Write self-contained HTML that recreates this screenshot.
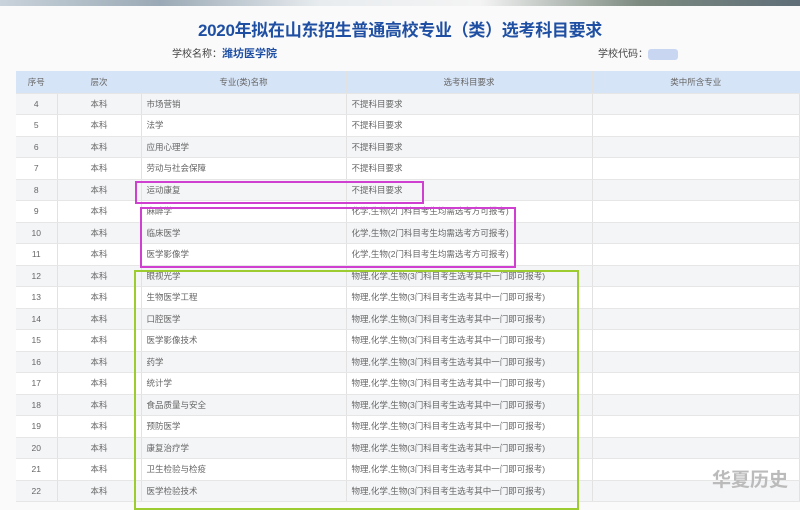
<!DOCTYPE html>
<html><head><meta charset="utf-8"><style>
body{margin:0;width:800px;height:496px;overflow:hidden;background:#fafafa;font-family:"Liberation Sans","Noto Sans CJK SC",sans-serif;position:relative}
.banner{position:absolute;left:0;top:0;width:800px;height:6px;background:linear-gradient(90deg,#c9d3db 0%,#9aa9b5 20%,#e8ecef 40%,#f4f4f4 60%,#7c8a80 80%,#5f6e78 100%)}
.title{position:absolute;top:16px;left:0;width:800px;text-align:center;color:#1f4fa3;font-size:17px;font-weight:bold;letter-spacing:-0.3px}
.sub{position:absolute;top:45px;font-size:10px;color:#444}
.sub b{color:#1f4fa3;font-size:11px;font-weight:bold}
table{position:absolute;left:16px;top:71px;border-collapse:collapse;width:784px;table-layout:fixed;font-size:8.5px;color:#666}
td{height:21.5px;padding:0;border-right:1px solid #e2e2e2;border-bottom:1px solid #e6e6e6;box-sizing:border-box;white-space:nowrap;overflow:hidden}
tr.h td{background:#d6e4f7;height:22px;color:#666}
tr:nth-child(even) td{background:#f4f5f7}
tr:nth-child(odd):not(.h) td{background:#fff}
.c{text-align:center}.l{padding-left:5px}
.box{position:absolute;box-sizing:border-box}
.wm{position:absolute;left:712px;top:465px;font-size:19px;font-weight:bold;color:#bbb}
</style></head><body>
<div class="banner"></div>
<div class="title">2020年拟在山东招生普通高校专业（类）选考科目要求</div>
<div class="sub" style="left:172px">学校名称：<b>潍坊医学院</b></div>
<div class="sub" style="left:598px">学校代码：<span style="display:inline-block;width:30px;height:11px;background:#c9d6f2;vertical-align:middle;border-radius:3px"></span></div>
<table>
<colgroup><col style="width:41px"><col style="width:84px"><col style="width:205px"><col style="width:246px"><col></colgroup>
<tr class="h"><td class="c">序号</td><td class="c">层次</td><td class="c">专业(类)名称</td><td class="c">选考科目要求</td><td class="c">类中所含专业</td></tr>
<tr><td class="c">4</td><td class="c">本科</td><td class="l">市场营销</td><td class="l">不提科目要求</td><td></td></tr>
<tr><td class="c">5</td><td class="c">本科</td><td class="l">法学</td><td class="l">不提科目要求</td><td></td></tr>
<tr><td class="c">6</td><td class="c">本科</td><td class="l">应用心理学</td><td class="l">不提科目要求</td><td></td></tr>
<tr><td class="c">7</td><td class="c">本科</td><td class="l">劳动与社会保障</td><td class="l">不提科目要求</td><td></td></tr>
<tr><td class="c">8</td><td class="c">本科</td><td class="l">运动康复</td><td class="l">不提科目要求</td><td></td></tr>
<tr><td class="c">9</td><td class="c">本科</td><td class="l">麻醉学</td><td class="l">化学,生物(2门科目考生均需选考方可报考)</td><td></td></tr>
<tr><td class="c">10</td><td class="c">本科</td><td class="l">临床医学</td><td class="l">化学,生物(2门科目考生均需选考方可报考)</td><td></td></tr>
<tr><td class="c">11</td><td class="c">本科</td><td class="l">医学影像学</td><td class="l">化学,生物(2门科目考生均需选考方可报考)</td><td></td></tr>
<tr><td class="c">12</td><td class="c">本科</td><td class="l">眼视光学</td><td class="l">物理,化学,生物(3门科目考生选考其中一门即可报考)</td><td></td></tr>
<tr><td class="c">13</td><td class="c">本科</td><td class="l">生物医学工程</td><td class="l">物理,化学,生物(3门科目考生选考其中一门即可报考)</td><td></td></tr>
<tr><td class="c">14</td><td class="c">本科</td><td class="l">口腔医学</td><td class="l">物理,化学,生物(3门科目考生选考其中一门即可报考)</td><td></td></tr>
<tr><td class="c">15</td><td class="c">本科</td><td class="l">医学影像技术</td><td class="l">物理,化学,生物(3门科目考生选考其中一门即可报考)</td><td></td></tr>
<tr><td class="c">16</td><td class="c">本科</td><td class="l">药学</td><td class="l">物理,化学,生物(3门科目考生选考其中一门即可报考)</td><td></td></tr>
<tr><td class="c">17</td><td class="c">本科</td><td class="l">统计学</td><td class="l">物理,化学,生物(3门科目考生选考其中一门即可报考)</td><td></td></tr>
<tr><td class="c">18</td><td class="c">本科</td><td class="l">食品质量与安全</td><td class="l">物理,化学,生物(3门科目考生选考其中一门即可报考)</td><td></td></tr>
<tr><td class="c">19</td><td class="c">本科</td><td class="l">预防医学</td><td class="l">物理,化学,生物(3门科目考生选考其中一门即可报考)</td><td></td></tr>
<tr><td class="c">20</td><td class="c">本科</td><td class="l">康复治疗学</td><td class="l">物理,化学,生物(3门科目考生选考其中一门即可报考)</td><td></td></tr>
<tr><td class="c">21</td><td class="c">本科</td><td class="l">卫生检验与检疫</td><td class="l">物理,化学,生物(3门科目考生选考其中一门即可报考)</td><td></td></tr>
<tr><td class="c">22</td><td class="c">本科</td><td class="l">医学检验技术</td><td class="l">物理,化学,生物(3门科目考生选考其中一门即可报考)</td><td></td></tr>
</table>
<div class="box" style="left:135px;top:181px;width:289px;height:23px;border:2px solid #d040d0"></div>
<div class="box" style="left:140px;top:207px;width:376px;height:61px;border:2px solid #d040d0"></div>
<div class="box" style="left:134px;top:270px;width:445px;height:240px;border:2px solid #9ccc30"></div>
<div class="wm">华夏历史</div>
</body></html>
